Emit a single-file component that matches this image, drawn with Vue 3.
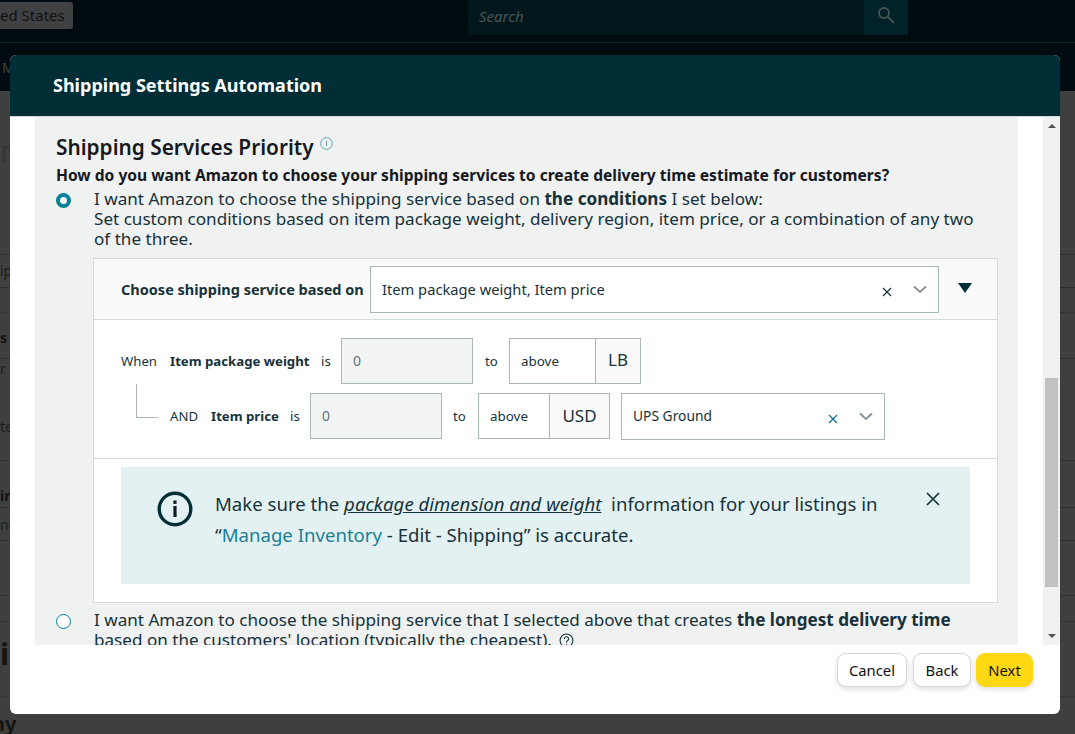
<script setup>
import { ref } from 'vue'

// what shows of the page behind the modal, top to bottom
const pageRows = ref([
  { h: 164, top: 40, text: 'n', cls: 'title cut', short: true },
  { h: 33, top: 6, text: 'ip', cls: '', short: true },
  { h: 25, top: 0, text: '', cls: '' },
  { h: 46, top: 15, text: 's', cls: 'bold', short: true },
  { h: 37, top: 0, text: 'r', cls: '', plain: true },
  { h: 65, top: 21, text: 'te', cls: '' },
  { h: 47, top: 25, text: 'ir', cls: 'bold', short: true },
  { h: 33, top: 7, text: 'nc', cls: '', short: true },
  { h: 55, top: 0, text: '', cls: '' },
  { h: 26, top: 0, text: '', cls: '' },
  { h: 75, top: 12, text: 'i', cls: 'title bold' },
  { h: 38, top: 15, text: 'ny', cls: 'foot bold', plain: true }
])
</script>

<template>
  <div class="page">
    <div class="topbar">
      <div class="locale">ed States</div>
      <div class="search">
        <span class="search-text">Search</span>
        <span class="search-btn">
          <svg width="18" height="18" viewBox="0 0 18 18" fill="none" stroke="#45504f" stroke-width="2">
            <circle cx="7" cy="7" r="5" />
            <path d="M11 11l6 6" />
          </svg>
        </span>
      </div>
    </div>
    <div class="navbar"><span>M</span></div>
    <div class="behind">
      <div
        v-for="(row, index) in pageRows"
        :key="index"
        class="behind-row"
        :class="[row.cls, { short: row.short, plain: row.plain }]"
        :style="{ height: row.h + 'px', paddingTop: row.top + 'px' }"
      >{{ row.text }}</div>
    </div>

    <div class="modal">
      <div class="modal-head">Shipping Settings Automation</div>
      <div class="modal-scroll">
        <div class="panel">
          <h2 class="panel-title">
            Shipping Services Priority
            <svg class="info-small" width="13" height="13" viewBox="0 0 13 13" fill="none">
              <circle cx="6.5" cy="6.5" r="5.8" stroke="#3f8ea0" stroke-width="0.8" />
              <path d="M6.5 4v5" stroke="#3f8ea0" stroke-width="0.8" />
            </svg>
          </h2>
          <p class="question">How do you want Amazon to choose your shipping services to create delivery time estimate for customers?</p>

          <div class="option">
            <span class="radio on"></span>
            <div class="option-text">
              <div>I want Amazon to choose the shipping service based on <b>the conditions</b> I set below:</div>
              <div>Set custom conditions based on item package weight, delivery region, item price, or a combination of any two of the three.</div>
            </div>
          </div>

          <div class="box">
            <div class="box-head">
              <span class="box-label">Choose shipping service based on</span>
              <div class="select wide">
                <span class="select-text">Item package weight, Item price</span>
                <svg class="x" width="10" height="10" viewBox="0 0 10 10"><path d="M1 1l8 8M9 1l-8 8" stroke="#16323a" stroke-width="1.2" /></svg>
                <svg class="chev" width="14" height="9" viewBox="0 0 14 9" fill="none"><path d="M1 1.5l6 5.5 6-5.5" stroke="#879596" stroke-width="2" /></svg>
              </div>
              <span class="caret"></span>
            </div>

            <div class="rules">
              <div class="rule first">
                <span class="word when">When</span>
                <b class="weight">Item package weight</b>
                <span class="word is">is</span>
                <div class="num">0</div>
                <span class="word to">to</span>
                <div class="group">
                  <div class="above a87">above</div>
                  <div class="unit u45">LB</div>
                </div>
              </div>
              <div class="rule second">
                <span class="elbow"></span>
                <span class="word and">AND</span>
                <b class="price">Item price</b>
                <span class="word is">is</span>
                <div class="num">0</div>
                <span class="word to">to</span>
                <div class="group">
                  <div class="above a72">above</div>
                  <div class="unit u60">USD</div>
                </div>
                <div class="select ups">
                  <span class="select-text">UPS Ground</span>
                  <svg class="x" width="10" height="10" viewBox="0 0 10 10"><path d="M1 1l8 8M9 1l-8 8" stroke="#0f6f8c" stroke-width="1.2" /></svg>
                  <svg class="chev" width="14" height="9" viewBox="0 0 14 9" fill="none"><path d="M1 1.5l6 5.5 6-5.5" stroke="#879596" stroke-width="2" /></svg>
                </div>
              </div>
            </div>

            <div class="notice-wrap">
              <div class="notice">
                <svg class="notice-icon" width="36" height="36" viewBox="0 0 36 36" fill="none">
                  <circle cx="18" cy="18" r="15.8" stroke="#002f36" stroke-width="3.4" />
                  <rect x="16.4" y="15" width="3.2" height="11" fill="#16191f" />
                  <rect x="16.4" y="9.5" width="3.2" height="3.4" fill="#16191f" />
                </svg>
                <div class="notice-text">
                  <div>Make sure the <a class="doc">package dimension and weight</a>&nbsp; information for your listings in</div>
                  <div>“<a class="link">Manage Inventory</a> - Edit - Shipping” is accurate.</div>
                </div>
                <svg class="notice-close" width="14" height="14" viewBox="0 0 14 14"><path d="M1 1l12 12M13 1L1 13" stroke="#16323a" stroke-width="1.7" /></svg>
              </div>
            </div>
          </div>

          <div class="option last">
            <span class="radio"></span>
            <div class="option-text">
              I want Amazon to choose the shipping service that I selected above that creates <b>the longest delivery time</b> based on the customers' location (typically the cheapest).
              <svg class="help" width="15" height="15" viewBox="0 0 14 14" fill="none">
                <circle cx="7" cy="7" r="6" stroke="#16323a" stroke-width="1" />
                <path d="M5 5.5a2 2 0 1 1 3 1.7c-.7.4-1 .8-1 1.6M7 10v1" stroke="#16323a" stroke-width="1" />
              </svg>
            </div>
          </div>
        </div>
        <div class="scrollbar">
          <span class="arrow up"></span>
          <span class="thumb"></span>
          <span class="arrow down"></span>
        </div>
      </div>
      <div class="modal-foot">
        <button class="btn cancel">Cancel</button>
        <button class="btn back">Back</button>
        <button class="btn primary">Next</button>
      </div>
    </div>
  </div>
</template>

<style scoped>
.page {
  position: relative;
  width: 1075px;
  height: 734px;
  overflow: hidden;
  background: #3e3f3f;
  font-family: "Noto Sans", "Open Sans", sans-serif;
  color: #0f1111;
}
.topbar {
  height: 42px;
  background: #000c0f;
  border-bottom: 1px solid #1c2224;
  display: flex;
  justify-content: space-between;
}
.locale {
  margin-top: 2px;
  height: 27px;
  width: 73px;
  line-height: 26px;
  background: #3f4142;
  border-radius: 0 3px 3px 0;
  font-size: 15px;
  color: #111;
  white-space: nowrap;
}
.search {
  margin-right: 167px;
  width: 440px;
  height: 35px;
  background: #00181c;
  display: flex;
  align-items: center;
  justify-content: space-between;
}
.search-text {
  margin: -3px 0 0 11px;
  font-size: 15px;
  font-style: italic;
  color: #4a5557;
}
.search-btn {
  width: 44px;
  height: 35px;
  padding-bottom: 5px;
  box-sizing: border-box;
  background: #012228;
  display: flex;
  align-items: center;
  justify-content: center;
}
.navbar {
  height: 48px;
  background: #000c0f;
  font-size: 14px;
  color: #444;
  padding: 15px 0 0 2px;
  box-sizing: border-box;
}
.behind-row {
  box-sizing: border-box;
  border-bottom: 1px solid #333434;
  font-size: 14px;
  line-height: 20px;
  color: #1d1d1d;
  overflow: hidden;
}
.behind-row.short { border-bottom-color: #2d2e2e; }
.behind-row.plain { border-bottom: 0; }
.behind-row.title { font-size: 30px; line-height: 40px; color: #2c2c2c; }
.behind-row.cut { color: #363636; }
.behind-row.bold { font-weight: 700; color: #141414; }
.behind-row.foot { font-size: 20px; line-height: 24px; text-indent: -8px; }

.modal {
  position: absolute;
  left: 10px;
  top: 55px;
  width: 1050px;
  height: 659px;
  background: #fff;
  border-radius: 6px;
  overflow: hidden;
  display: flex;
  flex-direction: column;
}
.modal-head {
  height: 62px;
  flex: none;
  background: #002e36;
  color: #fff;
  font-size: 18px;
  font-weight: 700;
  line-height: 60px;
  padding-left: 43px;
  border-bottom: 1px solid #d5dbdb;
  box-sizing: border-box;
}
.modal-scroll {
  height: 528px;
  flex: none;
  display: flex;
  overflow: hidden;
  padding-left: 25px;
}
.panel {
  width: 983px;
  background: #f0f1f1;
  padding: 15px 20px 0 21px;
  box-sizing: border-box;
  overflow: hidden;
  flex: none;
}
.panel-title {
  margin: 0;
  font-size: 20.8px;
  line-height: 30px;
  font-weight: 600;
  color: #16191f;
}
.info-small {
  vertical-align: 5px;
  margin-left: 1px;
}
.question {
  margin: 2px 0 3px;
  font-size: 15.6px;
  font-weight: 700;
  line-height: 22px;
  color: #16191f;
  white-space: nowrap;
}
.option {
  display: flex;
  font-size: 17.1px;
  line-height: 20px;
  color: #16323a;
}
.option-text { width: 890px; }
.radio {
  flex: none;
  width: 15px;
  height: 15px;
  border-radius: 50%;
  border: 1px solid #008296;
  background: #fff;
  margin: 4px 23px 0 0;
  box-sizing: border-box;
}
.radio.on {
  border: 4px solid #008296;
}
.option-text b { font-weight: 700; }
.box {
  margin: 9px 0 7px 37px;
  background: #fff;
  border: 1px solid #d5dbdb;
}
.box-head {
  height: 61px;
  padding: 1px 0 0 27px;
  background: #fafafa;
  border-bottom: 1px solid #d5dbdb;
  display: flex;
  align-items: center;
  box-sizing: border-box;
}
.box-label {
  width: 249px;
  flex: none;
  margin-top: -2px;
  font-size: 14.5px;
  font-weight: 700;
  color: #16323a;
  white-space: nowrap;
}
.select {
  display: flex;
  align-items: center;
  background: #fff;
  border: 1px solid #aab7b8;
  box-sizing: border-box;
  color: #16323a;
  padding: 0 11px;
}
.select-text { flex: 1; padding-bottom: 2px; }
.select .x { margin-right: 21px; margin-top: 5px; }
.wide { width: 569px; height: 47px; font-size: 14.7px; }
.caret {
  width: 0;
  height: 0;
  margin: -3px 0 0 19px;
  border-left: 7px solid transparent;
  border-right: 7px solid transparent;
  border-top: 10px solid #002e36;
}
.rules {
  padding: 18px 0 19px 27px;
  border-bottom: 1px solid #d5dbdb;
  font-size: 13.2px;
  color: #16323a;
}
.rule {
  display: flex;
  align-items: center;
  height: 46px;
  white-space: nowrap;
}
.rule.second {
  margin-top: 9px;
  padding-left: 49px;
  position: relative;
}
.rule b { font-weight: 700; flex: none; }
.word { flex: none; }
.when { width: 49px; }
.weight { width: 151px; }
.and { width: 41px; }
.price { width: 79px; }
.is { width: 20px; }
.to { width: 24px; }
.elbow {
  position: absolute;
  left: 15px;
  top: -9px;
  width: 21px;
  height: 33px;
  border-left: 1px solid #aab7b8;
  border-bottom: 1px solid #aab7b8;
}
.num {
  width: 132px;
  height: 46px;
  line-height: 44px;
  margin-right: 12px;
  padding-left: 11px;
  box-sizing: border-box;
  background: #f2f4f4;
  border: 1px solid #aab7b8;
  color: #687078;
  font-size: 14px;
}
.second .num { margin-right: 11px; }
.second .to { width: 25px; }
.group {
  display: flex;
  height: 46px;
  border: 1px solid #aab7b8;
  box-sizing: border-box;
}
.above {
  background: #fff;
  line-height: 44px;
  padding-left: 11px;
  box-sizing: border-box;
  font-size: 13.4px;
}
.unit {
  background: #fafafa;
  border-left: 1px solid #aab7b8;
  line-height: 42px;
  text-align: center;
  font-size: 17px;
  box-sizing: border-box;
}
.a87 { width: 85px; }
.a72 { width: 70px; }
.u45 { width: 45px; }
.u60 { width: 60px; line-height: 44px; }
.ups { width: 264px; height: 47px; margin-left: 11px; font-size: 13.8px; }
.notice-wrap {
  padding: 8px 27px 18px;
}
.notice {
  position: relative;
  height: 117px;
  background: #e3f1f3;
  display: flex;
  padding: 21px 0 0 36px;
  box-sizing: border-box;
}
.notice-icon { flex: none; margin: 3px 22px 0 0; }
.notice-text {
  font-size: 18.6px;
  line-height: 31px;
  color: #16323a;
  white-space: nowrap;
}
.doc { font-style: italic; text-decoration: underline; }
.link { color: #1a7f93; }
.notice-close { position: absolute; right: 30px; top: 25px; }
.help { vertical-align: -2px; margin-left: 3px; }
.scrollbar {
  position: absolute;
  right: 0;
  top: 62px;
  width: 17px;
  height: 528px;
  background: #f1f1f1;
}
.thumb {
  position: absolute;
  left: 2px;
  top: 261px;
  width: 13px;
  height: 209px;
  background: #c1c1c1;
}
.arrow {
  position: absolute;
  left: 5px;
  width: 0;
  height: 0;
  border-left: 4px solid transparent;
  border-right: 4px solid transparent;
}
.arrow.up { top: 7px; border-bottom: 4px solid #505050; }
.arrow.down { bottom: 7px; border-top: 4px solid #505050; }
.modal-foot {
  flex: 1;
  display: flex;
  justify-content: flex-end;
  align-items: flex-start;
  gap: 6px;
  padding: 8px 27px 0 0;
}
.btn {
  height: 34px;
  padding: 0;
  background: #fff;
  border: 1px solid #d5d9d9;
  border-radius: 9px;
  font: 14.8px "Noto Sans", sans-serif;
  color: #0f1111;
  box-shadow: 0 2px 5px rgba(15, 17, 17, 0.15);
}
.cancel { width: 70px; }
.back { width: 58px; }
.btn.primary {
  width: 57px;
  margin-left: -1px;
  background: #ffd814;
  border-color: #ffd814;
}
</style>
